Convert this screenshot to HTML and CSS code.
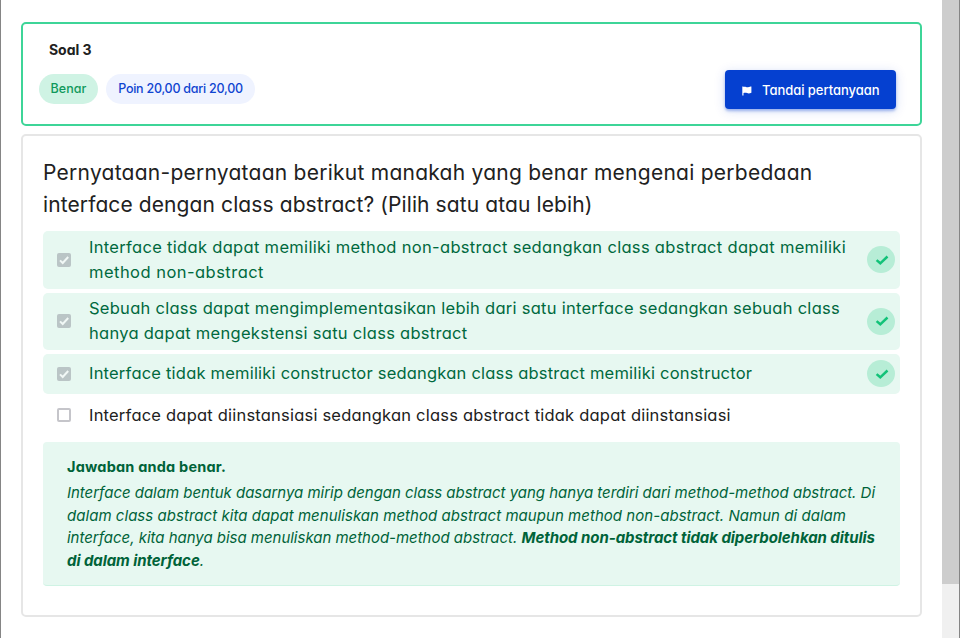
FILE: index.html
```html
<!DOCTYPE html>
<html lang="id">
<head>
<meta charset="utf-8">
<title>Soal 3</title>
<link rel="stylesheet" href="styles.css">
</head>
<body>
<svg width="0" height="0" class="defs">
  <symbol id="tick" viewBox="0 0 14 12"><path d="M1.6 6.100 5.300 9.300 12.500 2.500" fill="none" stroke="currentColor" stroke-width="2.500"/></symbol>
  <symbol id="boxtick" viewBox="0 0 14 14"><path d="M3 7.4 5.7 10 11.2 4" fill="none" stroke="currentColor" stroke-width="2"/></symbol>
</svg>
<div class="window">
  <main class="page">
    <section class="card summary">
      <div class="summary-info">
        <h1 class="title">Soal 3</h1>
        <div class="badges">
          <span class="badge badge-ok">Benar</span>
          <span class="badge badge-points">Poin 20,00 dari 20,00</span>
        </div>
      </div>
      <button class="flag-button" type="button">
        <svg class="flag" viewBox="0 0 10 10"><path d="M.3.4h1.2v.7C3-.1 4.300 1.700 6 1.300 7.500 1 8.500.6 9.400.5v6.200C7.500 7.600 6.500 7.700 5 7 3.700 6.500 2.600 6.700 1.500 7.100V9.400H.3z" fill="currentColor"/></svg>
        <span>Tandai pertanyaan</span>
      </button>
    </section>
    <section class="card question">
      <h2 class="prompt"><span class="q1">Pernyataan-pernyataan berikut manakah yang benar mengenai perbedaan</span><br><span class="q2">interface dengan class abstract? (Pilih satu atau lebih)</span></h2>
      <ul class="options">
        <li class="option correct first">
          <span class="box checked"><svg><use href="#boxtick"/></svg></span>
          <p class="label"><span class="a1">Interface tidak dapat memiliki method non-abstract sedangkan class abstract dapat memiliki</span><br><span class="a2">method non-abstract</span></p>
          <span class="mark"><svg><use href="#tick"/></svg></span>
        </li>
        <li class="option correct second">
          <span class="box checked"><svg><use href="#boxtick"/></svg></span>
          <p class="label"><span class="b1">Sebuah class dapat mengimplementasikan lebih dari satu interface sedangkan sebuah class</span><br><span class="b2">hanya dapat mengekstensi satu class abstract</span></p>
          <span class="mark"><svg><use href="#tick"/></svg></span>
        </li>
        <li class="option correct short">
          <span class="box checked"><svg><use href="#boxtick"/></svg></span>
          <p class="label"><span class="c1">Interface tidak memiliki constructor sedangkan class abstract memiliki constructor</span></p>
          <span class="mark"><svg><use href="#tick"/></svg></span>
        </li>
        <li class="option short plain">
          <span class="box"></span>
          <p class="label"><span class="c1">Interface dapat diinstansiasi sedangkan class abstract tidak dapat diinstansiasi</span></p>
        </li>
      </ul>
      <div class="feedback">
        <strong class="feedback-title">Jawaban anda benar.</strong>
        <p class="feedback-text"><span class="f1">Interface dalam bentuk dasarnya mirip dengan class abstract yang hanya terdiri dari method-method abstract. Di</span><br><span class="f2">dalam class abstract kita dapat menuliskan method abstract maupun method non-abstract. Namun di dalam</span><br><span class="f1">interface, kita hanya bisa menuliskan method-method abstract. </span><b>Method non-abstract tidak diperbolehkan ditulis</b><br><b>di dalam interface</b>.</p>
      </div>
    </section>
  </main>
  <div class="scrollbar"><div class="thumb"></div></div>
</div>
</body>
</html>
```
FILE: styles.css
```css
* { box-sizing: border-box; }
body {
  margin: 0;
  background: #fff;
  color: #212121;
  font-family: Inter, "Open Sans", sans-serif;
  font-feature-settings: "cv11" 1;
}
h1, h2, p, ul { margin: 0; padding: 0; font-weight: 400; }
.defs { position: absolute; }
.window {
  display: flex;
  height: 638px;
  overflow: hidden;
  border-left: 1px solid #858585;
  border-right: 1px solid #858585;
}
.page { flex: 1; padding: 22px 20px 0; }
.card { border: 2px solid #e6e6e6; border-radius: 5px; white-space: nowrap; }
.summary {
  display: flex;
  justify-content: space-between;
  height: 104px;
  padding: 0 24px 0 16px;
  border-color: #3dd598;
}
.title {
  margin: 16px 0 14px 10px;
  font-size: 14px;
  font-weight: 700;
  line-height: 20px;
  letter-spacing: -.05px;
}
.badges { display: flex; gap: 8px; }
.badge {
  height: 30px;
  border-radius: 15px;
  text-align: center;
  font-size: 12.5px;
  font-weight: 500;
  line-height: 30px;
}
.badge-ok { width: 59px; background: #cff3e4; color: #0f995c; letter-spacing: .07px; }
.badge-points { width: 149px; background: #eff3ff; color: #0f45d1; letter-spacing: -.25px; }
.flag-button {
  display: flex;
  align-items: center;
  width: 171px;
  height: 39px;
  margin-top: 46px;
  padding: 0 0 0 17px;
  border: 0;
  border-radius: 4px;
  background: #0540d0;
  box-shadow: 0 2px 3px rgba(5, 64, 208, .35), 0 2px 12px rgba(5, 64, 208, .16);
  color: #fff;
  font: 500 13px/20px Inter, "Open Sans", sans-serif;
  font-feature-settings: "cv11" 1;
  letter-spacing: -.04px;
}
.flag { width: 10px; height: 10px; margin: 2px 10px 0 0; }
.question { height: 483px; margin-top: 8px; padding: 20px; }
.prompt { height: 75px; padding-top: 1px; font-size: 21px; line-height: 32px; }
.q1 { letter-spacing: .255px; }
.q2 { letter-spacing: .1px; }
.options { display: flex; flex-direction: column; gap: 4px; list-style: none; }
.option {
  display: flex;
  align-items: center;
  height: 57px;
  padding: 0 5px 0 14px;
  border-radius: 5px;
}
.first { height: 58px; }
.short { height: 40px; }
.plain { margin-top: -3px; }
.correct { background: #e7f8f1; color: #00693e; }
.box {
  width: 14px;
  height: 14px;
  margin-right: 18px;
  border: 2px solid #c5c5ca;
  border-radius: 2px;
}
.checked { border: 0; background: #bac5c6; color: #f1f8f6; }
.box svg { display: block; width: 14px; height: 14px; }
.label { flex: 1; font-size: 16.5px; line-height: 25px; }
.second .box, .second .label { margin-bottom: 1px; }
.short.correct .label { margin-bottom: 2px; }
.a1 { letter-spacing: .316px; }
.a2 { letter-spacing: .472px; }
.b1 { letter-spacing: .27px; }
.b2 { letter-spacing: .28px; }
.c1 { letter-spacing: .209px; }
.mark {
  display: grid;
  place-items: center;
  width: 28px;
  height: 27px;
  margin-bottom: 1px;
  border-radius: 50%;
  background: #b7edd6;
  color: #12c278;
}
.mark svg { width: 14px; height: 12px; margin-left: 1px; }
.feedback {
  height: 144px;
  margin-top: 7px;
  padding: 14px 24px;
  border-bottom: 1px solid #cff3e4;
  border-radius: 4px;
  background: #e7f8f1;
  color: #006339;
}
.feedback-title {
  display: block;
  font-size: 14.5px;
  font-weight: 700;
  line-height: 22px;
  letter-spacing: .195px;
}
.feedback-text {
  margin-top: 4px;
  font-size: 15px;
  font-style: italic;
  line-height: 22.5px;
}
.f1 { letter-spacing: -.023px; }
.f2 { letter-spacing: .04px; }
.feedback-text b { font-weight: 700; letter-spacing: -.06px; }
.scrollbar { width: 17px; background: #f0f0f0; }
.thumb { height: 584px; background: #cdcdcd; }
```
